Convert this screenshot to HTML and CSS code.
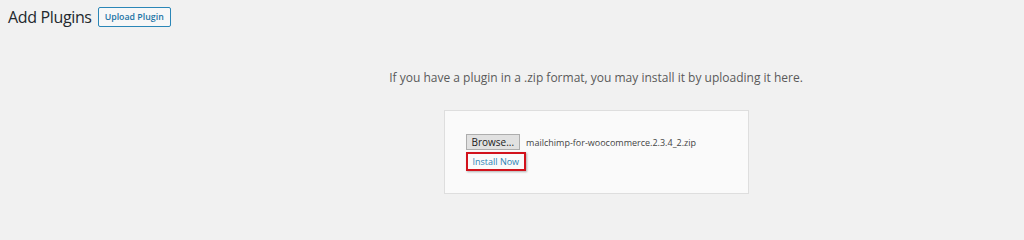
FILE: index.html
```html
<!DOCTYPE html>
<html>
<head>
<meta charset="utf-8">
<link rel="stylesheet" href="styles.css">
</head>
<body>
<div class="page">
  <div class="header">
    <h1 class="title">Add Plugins</h1>
    <a class="upload-btn">Upload Plugin</a>
  </div>
  <div class="main">
    <p class="desc">If you have a plugin in a .zip format, you may install it by uploading it here.</p>
    <div class="box">
      <div class="file-row">
        <span class="browse">Browse...</span>
        <span class="filename">mailchimp-for-woocommerce.2.3.4_2.zip</span>
      </div>
      <span class="install">Install Now</span>
    </div>
  </div>
</div>
</body>
</html>
```
FILE: styles.css
```css
html, body {
  margin: 0;
  padding: 0;
  background: #f1f1f1;
  font-family: "Open Sans", "Noto Sans", sans-serif;
  color: #444;
}
.page {
  display: flex;
  flex-direction: column;
  width: 1024px;
  height: 220px;
  overflow: hidden;
}
.header {
  display: flex;
  align-items: center;
  gap: 6px;
  padding: 7px 0 0 8px;
  height: 20px;
}
.title {
  margin: 0;
  font-size: 16px;
  font-weight: 400;
  color: #23282d;
  line-height: 20px;
  letter-spacing: -0.35px;
}
.upload-btn {
  display: flex;
  align-items: center;
  box-sizing: border-box;
  height: 20px;
  padding: 0 6px;
  border: 1px solid #2a86b7;
  background: #f7f7f7;
  color: #1d74a6;
  font-size: 8.8px;
  font-weight: 600;
  border-radius: 2px;
}
.main {
  display: flex;
  flex-direction: column;
  align-items: center;
  padding-left: 168px;
}
.desc {
  margin: 42px 0 0;
  font-size: 12px;
  line-height: 18px;
  color: #5a5a5a;
}
.box {
  box-sizing: border-box;
  width: 305px;
  height: 84px;
  margin-top: 23px;
  background: #fafafa;
  border: 1px solid #dedede;
  padding: 23px 21px 0;
  display: flex;
  flex-direction: column;
  align-items: flex-start;
}
.file-row {
  display: flex;
  align-items: center;
  gap: 6px;
}
.browse {
  box-sizing: border-box;
  height: 16px;
  display: flex;
  align-items: center;
  padding: 0 5px;
  border: 1px solid #adadad;
  background: #e1e1e1;
  color: #222;
  font-size: 10px;
}
.filename {
  font-size: 9px;
  color: #444;
}
.install {
  margin-top: 2px;
  box-sizing: border-box;
  height: 19px;
  display: flex;
  align-items: center;
  padding: 0 5px;
  border: 2px solid #d2121c;
  box-shadow: 1px 1px 2px rgba(0,0,0,0.3);
  color: #2c83b5;
  font-size: 9px;
}
```
